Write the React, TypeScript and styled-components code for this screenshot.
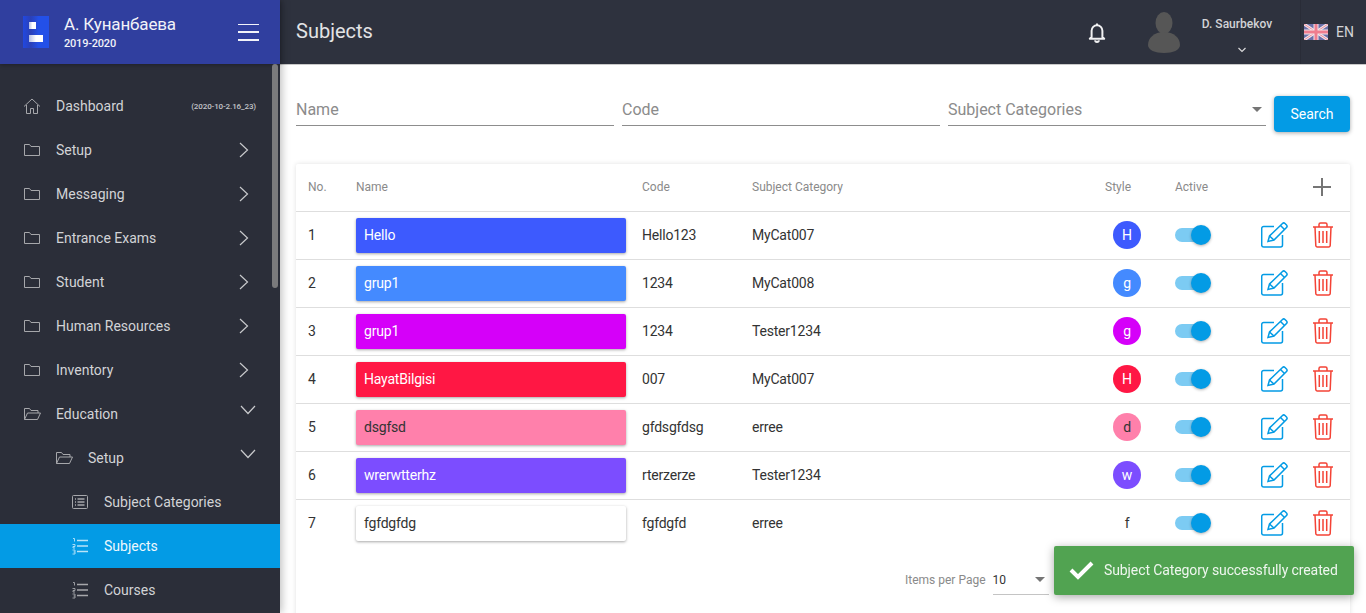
import React from 'react';
import styled, { createGlobalStyle } from 'styled-components';

const GlobalStyle = createGlobalStyle`
  html, body {
    margin: 0;
    height: 100%;
    overflow: hidden;
    background: #fff;
    font-family: Roboto, "Noto Sans", sans-serif;
  }
  * {
    box-sizing: border-box;
  }
`;

const Page = styled.div`
  display: flex;
  height: 613px;
  overflow: hidden;
`;

const Sidebar = styled.aside`
  position: relative;
  z-index: 2;
  flex: 0 0 280px;
  display: flex;
  flex-direction: column;
  background: #2b2e39;
  box-shadow: 2px 0 8px rgba(0, 0, 0, 0.25);
`;

const Brand = styled.div`
  height: 64px;
  display: flex;
  align-items: center;
  padding: 0 21px 0 23px;
  background: #303f9f;
  box-shadow: 0 1px 4px rgba(0, 0, 0, 0.3);
`;

const Logo = styled.svg`
  width: 26px;
  height: 32px;
  margin-right: 15px;
`;

const BrandText = styled.div`
  flex: 1;
  color: #f1f2f8;
`;

const BrandName = styled.div`
  font-size: 17px;
  line-height: 20px;
  margin-top: 1px;
  letter-spacing: -0.15px;
`;

const BrandYear = styled.div`
  font-size: 11px;
  line-height: 14px;
  margin-top: 3px;
  font-weight: 500;
  letter-spacing: -0.2px;
`;

const Burger = styled.div`
  width: 21px;
  height: 17px;
  display: flex;
  flex-direction: column;
  justify-content: space-between;
  span {
    height: 1.5px;
    background: #f2f3fa;
  }
`;

const NavList = styled.nav`
  position: relative;
  flex: 1;
  padding-top: 20px;
  overflow: hidden;
`;

const ScrollThumb = styled.div`
  position: absolute;
  top: 0;
  right: 2px;
  width: 6px;
  height: 224px;
  border-radius: 3px;
  background: #7a7a7c;
`;

const NavRow = styled.div<{ $level: number; $active?: boolean }>`
  height: 44px;
  display: flex;
  align-items: center;
  padding-left: ${(p) => 23 + p.$level * 32 + (p.$level === 2 ? -16 : 0)}px;
  padding-right: 24px;
  font-size: 14px;
  background: ${(p) => (p.$active ? '#039be5' : 'transparent')};
  color: ${(p) => (p.$active ? '#eef8fd' : '#d2d3d6')};
`;

const NavIcon = styled.svg<{ $active?: boolean }>`
  width: 18px;
  height: 18px;
  margin-right: 15px;
  flex: none;
  fill: none;
  stroke: ${(p) => (p.$active ? '#b9e4f8' : '#a6a7ab')};
  stroke-width: 1;
`;

const NavLabel = styled.span`
  flex: 1;
`;

const Build = styled.span`
  font-size: 8px;
  font-weight: 500;
  color: #c4c5c9;
  letter-spacing: -0.12px;
`;

const Chevron = styled.svg<{ $open?: boolean }>`
  width: 16px;
  height: 16px;
  flex: none;
  margin-right: ${(p) => (p.$open ? '0' : '4px')};
  margin-bottom: ${(p) => (p.$open ? '8px' : '0')};
  fill: none;
  stroke: #c9cacd;
  stroke-width: 1.2;
`;

const Main = styled.main`
  flex: 1;
  min-width: 0;
  display: flex;
  flex-direction: column;
`;

const Topbar = styled.header`
  height: 65px;
  flex: none;
  display: flex;
  align-items: center;
  background: #2e323e;
  border-bottom: 1px solid #c9c9c9;
`;

const Title = styled.h1`
  flex: 1;
  margin: 0 0 2px 16px;
  font-size: 20px;
  line-height: 28px;
  font-weight: 400;
  color: #e2e3e5;
`;

const BellWrap = styled.svg`
  width: 18px;
  height: 21px;
  margin-right: 41px;
  fill: none;
  stroke: #f1f1f2;
  stroke-width: 2.2;
`;

const Avatar = styled.svg`
  width: 34px;
  height: 41px;
  margin-right: 20px;
  fill: #565656;
`;

const UserBox = styled.div`
  width: 72px;
  margin-right: 27px;
  text-align: center;
  align-self: stretch;
  padding-top: 16px;
  color: #d2d3d6;
  font-size: 12px;
  font-weight: 500;
  line-height: 16px;
  white-space: nowrap;
`;

const UserCaret = styled.svg`
  display: block;
  width: 10px;
  height: 6px;
  margin: 15px 0 0 36px;
  fill: none;
  stroke: #d8d8da;
  stroke-width: 1.2;
`;

const LangBox = styled.div`
  align-self: stretch;
  width: 66px;
  display: flex;
  align-items: center;
  gap: 8px;
  padding-left: 3px;
  border-left: 1px solid #292c37;
  color: #d2d3d6;
  font-size: 14px;
`;

const Flag = styled.svg`
  width: 24px;
  height: 16px;
  flex: none;
`;

const Content = styled.div`
  flex: 1;
  padding: 31px 16px 0;
`;

const Filters = styled.div`
  display: flex;
  gap: 8px;
  height: 68px;
`;

const Field = styled.div`
  flex: 0 0 318px;
  height: 30px;
  display: flex;
  align-items: center;
  justify-content: space-between;
  padding-bottom: 2px;
  border-bottom: 1px solid #8d8d8d;
  font-size: 16px;
  color: #8b8b8b;
`;

const Caret = styled.span`
  width: 0;
  height: 0;
  margin-right: 4px;
  border-left: 5.5px solid transparent;
  border-right: 5.5px solid transparent;
  border-top: 5.5px solid #757575;
`;

const SearchButton = styled.button`
  width: 76px;
  height: 36px;
  border: 0;
  border-radius: 4px;
  background: #039be5;
  color: #fff;
  font-family: inherit;
  font-size: 14px;
  font-weight: 400;
  box-shadow: 0 1px 4px rgba(0, 0, 0, 0.35);
`;

const Card = styled.section`
  border-radius: 2px;
  box-shadow: 0 0 5px rgba(0, 0, 0, 0.12);
`;

const Row = styled.div<{ $head?: boolean; $last?: boolean }>`
  display: grid;
  grid-template-columns: 48px 286px 110px 353px 70px 86px 51px 1fr;
  align-items: center;
  height: 48px;
  padding: 0 0 1px 12px;
  border-bottom: 1px solid ${(p) => (p.$last ? 'transparent' : '#dedede')};
  font-size: ${(p) => (p.$head ? '12px' : '14px')};
  letter-spacing: ${(p) => (p.$head ? '0' : '-0.2px')};
  color: ${(p) => (p.$head ? '#8a8a8a' : '#333')};
`;

const Chip = styled.div<{ $bg: string; $fg: string }>`
  width: 270px;
  height: 35px;
  margin-top: 1px;
  display: flex;
  align-items: center;
  padding: 0 0 1px 8px;
  border-radius: 2px;
  background: ${(p) => p.$bg};
  color: ${(p) => p.$fg};
  box-shadow: 0 1px 3px rgba(0, 0, 0, 0.35);
`;

const Dot = styled.div<{ $bg: string; $fg: string }>`
  width: 28px;
  height: 28px;
  margin-left: 8px;
  display: flex;
  align-items: center;
  justify-content: center;
  border-radius: 50%;
  background: ${(p) => p.$bg};
  color: ${(p) => p.$fg};
`;

const Toggle = styled.div`
  position: relative;
  width: 30px;
  height: 14px;
  border-radius: 7px;
  background: #7ccbf3;
`;

const Thumb = styled.span`
  position: absolute;
  top: -3px;
  left: 16px;
  width: 20px;
  height: 20px;
  border-radius: 50%;
  background: #039be5;
  box-shadow: 0 1px 3px rgba(0, 0, 0, 0.3);
`;

const EditIcon = styled.svg`
  width: 28px;
  height: 26px;
  fill: none;
  stroke: #039be5;
  stroke-width: 1.5;
`;

const TrashIcon = styled.svg`
  width: 22px;
  height: 26px;
  fill: none;
  stroke: #f44336;
  stroke-width: 1.5;
`;

const PlusIcon = styled.svg`
  width: 20px;
  height: 20px;
  stroke: #757575;
  stroke-width: 2;
`;

const Footer = styled.div`
  display: flex;
  align-items: center;
  height: 90px;
  padding: 0 0 26px 609px;
  font-size: 12px;
  color: #8a8a8a;
`;

const PageSelect = styled.div`
  width: 56px;
  height: 30px;
  margin-left: 7px;
  display: flex;
  align-items: center;
  justify-content: space-between;
  border-bottom: 1px solid #c4c4c4;
  color: #333;
`;

const Toast = styled.div`
  position: fixed;
  z-index: 5;
  right: 12px;
  top: 546px;
  width: 300px;
  height: 49px;
  display: flex;
  align-items: center;
  gap: 10px;
  padding: 0 0 1px 15px;
  border-radius: 2px;
  background: #51a351;
  color: #eef6ee;
  font-size: 14px;
  letter-spacing: -0.1px;
  white-space: nowrap;
  box-shadow: 0 2px 10px rgba(0, 0, 0, 0.35);
`;

const ToastCheck = styled.svg`
  width: 25px;
  height: 20px;
  flex: none;
  fill: none;
  stroke: #fff;
  stroke-width: 4;
`;

type IconName = 'home' | 'folder' | 'open' | 'box' | 'ol';

const iconPaths: Record<IconName, React.ReactNode> = {
  home: <path d="M1 9.5 9 2l8 7.500M3.500 8v8.500h4v-5h3v5h4V8" />,
  folder: <path d="M1.500 14.500v-11h5l1.500 2h8.500v9z" />,
  open: <path d="M1.500 14.500v-11h5l1.500 2h7v2.500M1.500 14.500 4.500 8h13l-3 6.500z" />,
  box: (
    <>
      <rect x="1.500" y="2.500" width="15" height="13" rx="1" />
      <path d="M6.500 6h7M6.500 9h7M6.500 12h7M4 6h1M4 9h1M4 12h1" strokeWidth="1.500" />
    </>
  ),
  ol: (
    <>
      <path d="M6 3.500h11M6 9h11M6 14.500h11" strokeWidth="1.600" />
      <path d="M2 1.500h1.500v3M1.500 7.500h2.500v2h-2v1.500H4M1.500 13H4v4H1.500M2.500 15H4" strokeWidth="0.900" />
    </>
  ),
};

type NavItem = {
  label: string;
  icon: IconName;
  level: number;
  arrow?: 'right' | 'down';
  active?: boolean;
  build?: string;
};

const navItems: NavItem[] = [
  { label: 'Dashboard', icon: 'home', level: 0, build: '(2020-10-2.16_23)' },
  { label: 'Setup', icon: 'folder', level: 0, arrow: 'right' },
  { label: 'Messaging', icon: 'folder', level: 0, arrow: 'right' },
  { label: 'Entrance Exams', icon: 'folder', level: 0, arrow: 'right' },
  { label: 'Student', icon: 'folder', level: 0, arrow: 'right' },
  { label: 'Human Resources', icon: 'folder', level: 0, arrow: 'right' },
  { label: 'Inventory', icon: 'folder', level: 0, arrow: 'right' },
  { label: 'Education', icon: 'open', level: 0, arrow: 'down' },
  { label: 'Setup', icon: 'open', level: 1, arrow: 'down' },
  { label: 'Subject Categories', icon: 'box', level: 2 },
  { label: 'Subjects', icon: 'ol', level: 2, active: true },
  { label: 'Courses', icon: 'ol', level: 2 },
];

const subjects = [
  { name: 'Hello', code: 'Hello123', category: 'MyCat007', bg: '#3d5afe', fg: '#fff' },
  { name: 'grup1', code: '1234', category: 'MyCat008', bg: '#448aff', fg: '#fff' },
  { name: 'grup1', code: '1234', category: 'Tester1234', bg: '#d500f9', fg: '#fff' },
  { name: 'HayatBilgisi', code: '007', category: 'MyCat007', bg: '#ff1744', fg: '#fff' },
  { name: 'dsgfsd', code: 'gfdsgfdsg', category: 'erree', bg: '#ff80ab', fg: '#333' },
  { name: 'wrerwtterhz', code: 'rterzerze', category: 'Tester1234', bg: '#7c4dff', fg: '#fff' },
  { name: 'fgfdgfdg', code: 'fgfdgfd', category: 'erree', bg: '#fff', fg: '#333' },
];

const App: React.FC = () => (
  <Page>
    <GlobalStyle />
    <Sidebar>
      <Brand>
        <Logo viewBox="0 0 26 32">
          <defs>
            <linearGradient id="logoBlue" x1="0" x2="1" y1="0" y2="0">
              <stop offset="0" stopColor="#2148e0" />
              <stop offset="0.3" stopColor="#2a40b8" />
              <stop offset="0.6" stopColor="#2350e8" />
              <stop offset="1" stopColor="#2350e8" />
            </linearGradient>
            <linearGradient id="logoWhite" x1="0" x2="1" y1="0" y2="0">
              <stop offset="0" stopColor="#b4bee6" />
              <stop offset="0.5" stopColor="#fff" />
            </linearGradient>
          </defs>
          <rect width="26" height="32" fill="url(#logoBlue)" />
          <rect x="6" y="6" width="7" height="7" fill="url(#logoWhite)" />
          <rect x="6" y="19" width="14" height="7" fill="url(#logoWhite)" />
        </Logo>
        <BrandText>
          <BrandName>А. Кунанбаева</BrandName>
          <BrandYear>2019-2020</BrandYear>
        </BrandText>
        <Burger>
          <span />
          <span />
          <span />
        </Burger>
      </Brand>
      <NavList>
        <ScrollThumb />
        {navItems.map((item) => (
          <NavRow key={item.label + item.level} $level={item.level} $active={item.active}>
            <NavIcon viewBox="0 0 18 18" $active={item.active}>
              {iconPaths[item.icon]}
            </NavIcon>
            <NavLabel>{item.label}</NavLabel>
            {item.build && <Build>{item.build}</Build>}
            {item.arrow === 'right' && (
              <Chevron viewBox="0 0 16 16">
                <path d="M4 1l7.500 7L4 15" />
              </Chevron>
            )}
            {item.arrow === 'down' && (
              <Chevron viewBox="0 0 16 16" $open>
                <path d="M1 4l7 7.500L15 4" />
              </Chevron>
            )}
          </NavRow>
        ))}
      </NavList>
    </Sidebar>
    <Main>
      <Topbar>
        <Title>Subjects</Title>
        <BellWrap viewBox="0 0 20 22">
          <path d="M4 16V9a6 6 0 0 1 12 0v7l2 2H2z" strokeLinejoin="round" />
          <path d="M8 19.500a2 2 0 0 0 4 0M10 1v2" />
        </BellWrap>
        <Avatar viewBox="0 0 34 41">
          <ellipse cx="17" cy="11" rx="8.500" ry="11" />
          <path d="M1 33c0-7 6-13 16-13s16 6 16 13c0 5-7 8-16 8S1 38 1 33z" />
        </Avatar>
        <UserBox>
          D. Saurbekov
          <UserCaret viewBox="0 0 10 6">
            <path d="M1.500 1 5 4.500 8.500 1" />
          </UserCaret>
        </UserBox>
        <LangBox>
          <Flag viewBox="0 0 24 16">
            <rect width="24" height="16" fill="#6a6fa8" />
            <path d="M0 0l24 16M24 0L0 16" stroke="#f3e6ea" strokeWidth="3" />
            <path d="M0 0l24 16M24 0L0 16" stroke="#ee8a98" strokeWidth="1" />
            <path d="M12 0v16M0 8h24" stroke="#f3e6ea" strokeWidth="5" />
            <path d="M12 0v16M0 8h24" stroke="#ef7d8e" strokeWidth="3" />
          </Flag>
          EN
        </LangBox>
      </Topbar>
      <Content>
        <Filters>
          <Field>Name</Field>
          <Field>Code</Field>
          <Field>
            Subject Categories
            <Caret />
          </Field>
          <SearchButton>Search</SearchButton>
        </Filters>
        <Card>
          <Row $head>
            <span>No.</span>
            <span>Name</span>
            <span>Code</span>
            <span>Subject Category</span>
            <span>Style</span>
            <span>Active</span>
            <span />
            <PlusIcon viewBox="0 0 20 20">
              <path d="M10 1v18M1 10h18" />
            </PlusIcon>
          </Row>
          {subjects.map((subject, index) => (
            <Row key={subject.code + index} $last={index === subjects.length - 1}>
              <span>{index + 1}</span>
              <Chip $bg={subject.bg} $fg={subject.fg}>
                {subject.name}
              </Chip>
              <span>{subject.code}</span>
              <span>{subject.category}</span>
              <Dot $bg={subject.bg} $fg={subject.fg}>
                {subject.name[0]}
              </Dot>
              <Toggle>
                <Thumb />
              </Toggle>
              <EditIcon viewBox="0 0 28 26">
                <path d="M21.500 13v10a2 2 0 0 1-2 2H2.700a2 2 0 0 1-2-2V6.500a2 2 0 0 1 2-2H13" />
                <path d="M7 19.500l1.500-5.500L21.500 1.500a1.800 1.800 0 0 1 2.500 0l1.500 1.500a1.800 1.800 0 0 1 0 2.500L13 18z" />
                <path d="M19.500 3.500l4 4M8.500 14l4.500 4" />
              </EditIcon>
              <TrashIcon viewBox="0 0 22 26">
                <path d="M1 5h20M7 5V2.500A1.500 1.500 0 0 1 8.500 1h5A1.500 1.500 0 0 1 15 2.500V5" />
                <path d="M3 5l.8 18.500a1.500 1.500 0 0 0 1.500 1.500h11.400a1.500 1.500 0 0 0 1.500-1.500L19 5" />
                <path d="M7.300 9v12M11 9v12M14.700 9v12" />
              </TrashIcon>
            </Row>
          ))}
          <Footer>
            Items per Page
            <PageSelect>
              10
              <Caret />
            </PageSelect>
          </Footer>
        </Card>
      </Content>
    </Main>
    <Toast>
      <ToastCheck viewBox="0 0 25 20">
        <path d="M2 10l7 7L23 3" />
      </ToastCheck>
      Subject Category successfully created
    </Toast>
  </Page>
);

export default App;
